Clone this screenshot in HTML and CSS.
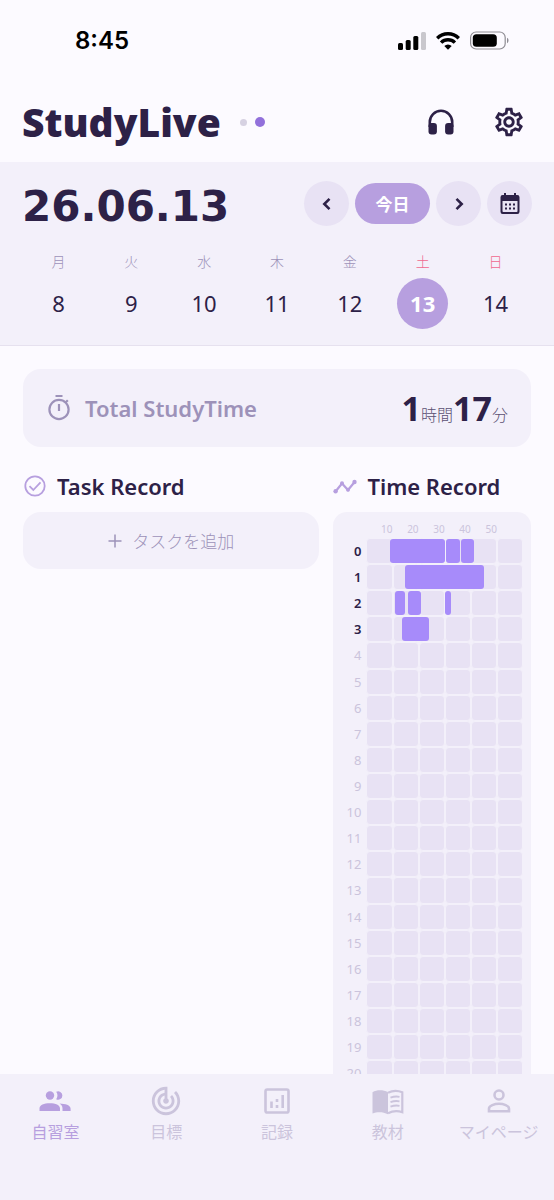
FILE: index.html
```html
<!DOCTYPE html>
<html lang="ja">
<head>
<meta charset="utf-8">
<meta name="viewport" content="width=device-width, initial-scale=1">
<title>StudyLive</title>
<link rel="stylesheet" href="styles.css">
</head>
<body>
<div class="app">
  <div class="status">
    <span class="status-time">8:45</span>
    <svg class="status-icons" viewBox="0 0 112 20" aria-hidden="true">
      <rect x="0" y="12" width="5" height="7" rx="1.5"/>
      <rect x="7.7" y="9" width="5" height="10" rx="1.5"/>
      <rect x="15.3" y="5" width="5" height="14" rx="1.5"/>
      <rect x="23" y="1" width="5" height="18" rx="1.5" fill="#c9c7cd"/>
      <g fill="none" stroke="#000" stroke-width="3.4">
        <path d="M39.2 7.2a15.4 15.4 0 0 1 21.6 0"/>
        <path d="M43.1 11.6a9.8 9.8 0 0 1 13.8 0"/>
      </g>
      <path d="M46.3 15a5.3 5.3 0 0 1 7.4 0L50 18.8z"/>
      <rect x="72.6" y="1" width="34.6" height="17" rx="5.5" fill="none" stroke="#8e8c93" stroke-width="1.2"/>
      <rect x="74.8" y="3.2" width="24" height="12.6" rx="3.6"/>
      <path d="M109 6.8v5.4c2-.8 2-4.6 0-5.4z" fill="#8e8c93"/>
    </svg>
  </div>
  <header class="header">
    <h1 class="logo">StudyLive</h1>
    <div class="pager"><span class="dot"></span><span class="dot dot-on"></span></div>
    <button class="icon-btn" type="button" aria-label="サウンド">
      <svg width="28" height="28" viewBox="0 0 28 28"><path d="M2.8 19v-5a11.2 11.2 0 0 1 22.4 0v5" fill="none" stroke="currentColor" stroke-width="2.6"/><rect x="1.5" y="15" width="8.4" height="11.5" rx="3" fill="currentColor"/><rect x="18.1" y="15" width="8.4" height="11.5" rx="3" fill="currentColor"/></svg>
    </button>
    <button class="icon-btn" type="button" aria-label="設定">
      <svg width="34" height="34" viewBox="0 0 24 24" fill="currentColor"><path d="M19.43 12.98c.04-.32.07-.64.07-.98 0-.34-.03-.66-.07-.98l2.11-1.65c.19-.15.24-.42.12-.64l-2-3.46c-.09-.16-.26-.25-.44-.25-.06 0-.12.01-.17.03l-2.49 1c-.52-.4-1.08-.73-1.69-.98l-.38-2.65C14.46 2.18 14.25 2 14 2h-4c-.25 0-.46.18-.49.42l-.38 2.65c-.61.25-1.17.59-1.69.98l-2.49-1c-.06-.02-.12-.03-.18-.03-.17 0-.34.09-.43.25l-2 3.46c-.13.22-.07.49.12.64l2.11 1.65c-.04.32-.07.65-.07.98 0 .33.03.66.07.98l-2.11 1.65c-.19.15-.24.42-.12.64l2 3.46c.09.16.26.25.44.25.06 0 .12-.01.17-.03l2.49-1c.52.4 1.08.73 1.69.98l.38 2.65c.03.24.24.42.49.42h4c.25 0 .46-.18.49-.42l.38-2.65c.61-.25 1.17-.59 1.69-.98l2.49 1c.06.02.12.03.18.03.17 0 .34-.09.43-.25l2-3.46c.12-.22.07-.49-.12-.64l-2.11-1.65zm-1.98-1.71c.04.31.05.52.05.73 0 .21-.02.43-.05.73l-.14 1.13.89.7 1.08.84-.7 1.21-1.27-.51-1.04-.42-.9.68c-.43.32-.84.56-1.25.73l-1.06.43-.16 1.13-.2 1.35h-1.4l-.19-1.35-.16-1.13-1.06-.43c-.43-.18-.83-.41-1.23-.71l-.91-.7-1.06.43-1.27.51-.7-1.21 1.08-.84.89-.7-.14-1.13c-.03-.31-.05-.54-.05-.74s.02-.43.05-.73l.14-1.13-.89-.7-1.08-.84.7-1.21 1.27.51 1.04.42.9-.68c.43-.32.84-.56 1.25-.73l1.06-.43.16-1.13.2-1.35h1.39l.19 1.35.16 1.13 1.06.43c.43.18.83.41 1.23.71l.91.7 1.06-.43 1.27-.51.7 1.21-1.07.85-.89.7.14 1.13zM12 8c-2.21 0-4 1.79-4 4s1.79 4 4 4 4-1.79 4-4-1.79-4-4-4zm0 6c-1.1 0-2-.9-2-2s.9-2 2-2 2 .9 2 2-.9 2-2 2z"/></svg>
    </button>
  </header>

  <section class="calendar">
    <div class="date-row">
      <h2 class="date">26.06.13</h2>
      <div class="date-nav">
        <button class="round" type="button" aria-label="前の日"><svg width="20" height="20" viewBox="0 0 20 20"><path d="M12.5 4.8 7.3 10l5.2 5.2" fill="none" stroke="currentColor" stroke-width="2.6"/></svg></button>
        <button class="today" type="button">今日</button>
        <button class="round" type="button" aria-label="次の日"><svg width="20" height="20" viewBox="0 0 20 20"><path d="m7.5 4.8 5.2 5.2-5.2 5.2" fill="none" stroke="currentColor" stroke-width="2.6"/></svg></button>
        <button class="round" type="button" aria-label="カレンダー"><svg width="20" height="22" viewBox="0 0 20 22"><path fill="currentColor" fill-rule="evenodd" d="M3 2h1V0h2v2h8V0h2v2h1a2.300 2.300 0 0 1 2.500 2.300v14.400A2.300 2.300 0 0 1 17 21H3a2.300 2.300 0 0 1-2.500-2.300V4.300A2.300 2.300 0 0 1 3 2zM2.500 8v10.200c0 .5.300.8.800.8h13.400c.5 0 .8-.3.800-.8V8z"/><path fill="currentColor" d="M5 10.500h2v2H5zm4 0h2v2H9zm4 0h2v2h-2zM5 14.500h2v2H5zm4 0h2v2H9zm4 0h2v2h-2z"/></svg></button>
      </div>
    </div>
    <div class="week">
      <button class="day" type="button"><span class="wd">月</span><span class="num">8</span></button>
      <button class="day" type="button"><span class="wd">火</span><span class="num">9</span></button>
      <button class="day" type="button"><span class="wd">水</span><span class="num">10</span></button>
      <button class="day" type="button"><span class="wd">木</span><span class="num">11</span></button>
      <button class="day" type="button"><span class="wd">金</span><span class="num">12</span></button>
      <button class="day" type="button" aria-current="date"><span class="wd weekend">土</span><span class="num num-on">13</span></button>
      <button class="day" type="button"><span class="wd weekend">日</span><span class="num">14</span></button>
    </div>
  </section>

  <main class="main">
    <section class="total">
      <svg width="26" height="28" viewBox="0 0 26 28" fill="none" stroke="currentColor" stroke-width="2.2"><circle cx="13" cy="15.500" r="9.600"/><path d="M13 10v7M9.500 2h7M19.800 8.200l2-2"/></svg>
      <span class="total-name">Total StudyTime</span>
      <span class="total-value"><b>1</b>時間<b>17</b>分</span>
    </section>

    <div class="columns">
      <section>
        <h3 class="title">
          <svg class="accent" width="24" height="24" viewBox="0 0 24 24" fill="none" stroke="currentColor" stroke-width="1.8"><circle cx="12" cy="12" r="9.700"/><path d="m6.500 12.200 3.800 3.800 7.200-7.600"/></svg>
          Task Record
        </h3>
        <button class="add" type="button">
          <svg width="14" height="14" viewBox="0 0 14 14" fill="none" stroke="currentColor" stroke-width="1.500"><path d="M7 .5v13M.5 7h13"/></svg>
          タスクを追加
        </button>
      </section>
      <section>
        <h3 class="title">
          <svg class="accent" width="24" height="24" viewBox="0 0 24 24" fill="currentColor"><path d="m2.500 17.500 6.500-8 6 6.500 7-8.500" fill="none" stroke="currentColor" stroke-width="2.200"/><circle cx="2.600" cy="17.200" r="2.200"/><circle cx="9" cy="9.300" r="2"/><circle cx="15" cy="15.700" r="2"/><circle cx="21.500" cy="8" r="2.200"/></svg>
          Time Record
        </h3>
        <div class="timetable" id="timetable">
          <div class="scale"><span>10</span><span>20</span><span>30</span><span>40</span><span>50</span></div>
        </div>
      </section>
    </div>
  </main>

  <nav class="tabs">
    <a class="tab tab-on" href="#room">
      <svg width="34" height="34" viewBox="0 0 34 34" fill="currentColor"><circle cx="12" cy="11.500" r="4.200"/><path d="M1.500 27v-2.500c0-3.600 4.500-5.300 10.300-5.300s10.200 1.700 10.200 5.300V27zM18.200 15.200a6.500 6.500 0 0 0 0-7.400 4.200 4.200 0 1 1 0 7.400zM24.500 27v-2.700c0-2.200-1.200-3.800-2.900-4.900 5.600.2 11 1.700 11 5.300V27z"/></svg>
      自習室</a>
    <a class="tab" href="#goal">
      <svg width="34" height="34" viewBox="0 0 24 24" fill="currentColor"><path d="M19.070 4.930l-1.410 1.410C19.100 7.790 20 9.790 20 12c0 4.420-3.580 8-8 8s-8-3.580-8-8c0-4.080 3.050-7.440 7-7.930v2.020C8.160 6.570 6 9.030 6 12c0 3.310 2.690 6 6 6s6-2.690 6-6c0-1.660-.67-3.160-1.760-4.240l-1.410 1.410C15.550 9.900 16 10.900 16 12c0 2.210-1.790 4-4 4s-4-1.790-4-4c0-1.860 1.280-3.410 3-3.860v2.140c-.6.350-1 .98-1 1.720 0 1.100.9 2 2 2s2-.9 2-2c0-.74-.4-1.380-1-1.720V2h-1C6.480 2 2 6.480 2 12s4.480 10 10 10 10-4.480 10-10c0-2.760-1.120-5.260-2.930-7.070z"/></svg>
      目標</a>
    <a class="tab" href="#log">
      <svg width="34" height="34" viewBox="0 0 34 34" fill="none" stroke="currentColor" stroke-width="2.600"><rect x="5.500" y="5.500" width="23" height="23" rx="1.800"/><path d="M11.500 17.500V24M17 21v3M17 15v3M22.700 11v13"/></svg>
      記録</a>
    <a class="tab" href="#books">
      <svg width="34" height="34" viewBox="0 0 34 34"><path fill="currentColor" d="M1.500 8.300C6 5.700 12 5.700 17 8.300v22c-5-2.600-11-2.600-15.500-.7z"/><g fill="none" stroke="currentColor"><path stroke-width="2.200" d="M17 8.700c4.500-2.300 9.500-2.500 14.300-.5v20c-4.300-1.400-9.800-1.200-14.300 1"/><path stroke-width="1.800" d="M19.500 13.700c3-1.200 6-1.500 9-.9M19.500 18.200c3-1.200 6-1.500 9-.9M19.500 22.700c3-1.200 6-1.500 9-.9"/></g></svg>
      教材</a>
    <a class="tab" href="#mypage">
      <svg width="34" height="34" viewBox="0 0 34 34" fill="none" stroke="currentColor" stroke-width="2.600"><circle cx="17" cy="11" r="4.500"/><path d="M7 27.200v-2.700c0-2.800 5.500-4.700 10-4.700s10 1.900 10 4.700v2.700z"/></svg>
      マイページ</a>
  </nav>
</div>
<script src="timetable.js"></script>
</body>
</html>
```

FILE: styles.css
```css
:root {
  --ink: #2d2147;
  --panel: #f3f0fa;
  --soft: #e8e2f4;
  --accent: #b79fdf;
  --muted: #9d92b9;
  --faint: #cbc4dc;
  --session: #a78bfa;
  --jp: "Noto Sans", "Noto Sans CJK JP", sans-serif;
}

* { box-sizing: border-box; }

body {
  margin: 0;
  background: #fcfaff;
  color: var(--ink);
  font-family: var(--jp);
}

h1, h2, h3 { margin: 0; }

svg { display: block; flex: none; }

button {
  border: 0;
  padding: 0;
  background: none;
  color: inherit;
  font: inherit;
  cursor: pointer;
}

.app {
  display: flex;
  flex-direction: column;
  height: 100vh;
}

.status {
  display: flex;
  flex: none;
  align-items: center;
  justify-content: space-between;
  height: 82px;
  padding: 0 44px 0 75px;
  color: #000;
}

.status-time {
  font: 600 24px/28px Inter, sans-serif;
}

.status-icons { width: 112px; height: 20px; }

.header {
  display: flex;
  flex: none;
  align-items: center;
  height: 80px;
  padding: 0 23px 0 22px;
}

.logo {
  font: 900 39px/48px "Noto Sans", sans-serif;
}

.pager {
  display: flex;
  align-items: center;
  gap: 8px;
  margin: 0 auto 0 19px;
}

.dot {
  width: 7px;
  height: 7px;
  border-radius: 50%;
  background: #d6d1e2;
}

.dot-on {
  width: 10px;
  height: 10px;
  background: #9270db;
}

.icon-btn {
  display: grid;
  place-items: center;
  width: 44px;
  height: 44px;
}

.icon-btn + .icon-btn { margin-left: 24px; }

.calendar {
  flex: none;
  padding: 19px 22px 16px;
  border-bottom: 1px solid #e6e1ef;
  background: var(--panel);
}

.date-row {
  display: flex;
  align-items: center;
  justify-content: space-between;
}

.date {
  padding-top: 6px;
  font: 700 42px/39px "DejaVu Sans", sans-serif;
}

.date-nav {
  display: flex;
  align-items: center;
  gap: 6px;
}

.round {
  display: grid;
  place-items: center;
  width: 45px;
  height: 45px;
  border-radius: 50%;
  background: var(--soft);
}

.today {
  width: 75px;
  height: 41px;
  border-radius: 21px;
  background: var(--accent);
  color: #fff;
  font-size: 17px;
  font-weight: 700;
}

.week {
  display: grid;
  grid-template-columns: repeat(7, 1fr);
  margin-top: 26px;
}

.day {
  display: flex;
  flex-direction: column;
  align-items: center;
  gap: 6px;
}

.wd {
  color: var(--muted);
  font-size: 14px;
  font-weight: 300;
  line-height: 20px;
}

.weekend { color: #f0688f; }

.num {
  width: 51px;
  border-radius: 50%;
  font-size: 22px;
  line-height: 51px;
}

.num-on {
  background: var(--accent);
  color: #fff;
  font-weight: 700;
}

.main {
  flex: 1;
  min-height: 0;
  overflow-y: auto;
  padding: 23px 23px 0;
  scrollbar-width: none;
}

.total {
  display: flex;
  align-items: center;
  height: 78px;
  padding: 0 23px;
  border-radius: 18px;
  background: var(--panel);
  color: var(--muted);
}

.total-name {
  margin: 0 auto 0 13px;
  font-size: 22px;
  font-weight: 600;
}

.total-value {
  color: #5b5073;
  font-size: 16px;
  font-weight: 300;
}

.total-value b {
  color: var(--ink);
  font-size: 34px;
  font-weight: 700;
}

.columns {
  display: grid;
  grid-template-columns: 3fr 2fr;
  gap: 14px;
  margin-top: 24px;
}

.title {
  display: flex;
  align-items: center;
  gap: 10px;
  margin-bottom: 11px;
  font-size: 22px;
  font-weight: 600;
  line-height: 30px;
  white-space: nowrap;
}

.accent { color: var(--accent); }

.add {
  display: flex;
  align-items: center;
  justify-content: center;
  gap: 10px;
  width: 100%;
  height: 57px;
  border-radius: 18px;
  background: var(--panel);
  color: var(--muted);
  font-size: 17px;
  font-weight: 300;
}

.timetable {
  padding: 9px 8px 8px 0;
  border-radius: 14px;
  background: var(--panel);
}

.scale,
.hour {
  display: grid;
  grid-template-columns: 28px 1fr;
  column-gap: 5px;
}

.scale {
  grid-template-columns: repeat(6, 1fr);
  column-gap: 0;
  padding-left: 33px;
  color: var(--faint);
  font-size: 10px;
  line-height: 17px;
  text-align: right;
}

.hour {
  align-items: center;
  color: var(--faint);
  font-size: 13px;
  line-height: 18px;
}

.hour-name { text-align: right; }

.hour-used .hour-name {
  color: var(--ink);
  font-weight: 600;
}

.track {
  position: relative;
  display: grid;
  grid-template-columns: repeat(6, 1fr);
}

.cell {
  aspect-ratio: 1;
  border: 1px solid var(--panel);
  border-radius: 4px;
  background: var(--soft);
}

.session {
  position: absolute;
  top: 1px;
  bottom: 1px;
  border-radius: 3px;
  background: var(--session);
}

.tabs {
  display: grid;
  flex: none;
  grid-template-columns: repeat(5, 1fr);
  padding: 10px 0 58px;
  background: var(--panel);
}

.tab {
  display: flex;
  flex-direction: column;
  align-items: center;
  gap: 4px;
  color: var(--faint);
  font-size: 16px;
  line-height: 20px;
  text-decoration: none;
  white-space: nowrap;
}

.tab-on { color: var(--accent); }
```

FILE: timetable.js
```js
// Study sessions per hour, as [start, end] in percent of the hour.
const sessions = {
  0: [[14.8, 50.3], [51, 60], [60.6, 68.8]],
  1: [[24.8, 75]],
  2: [[18.3, 24.8], [26.5, 35], [50.1, 54.1]],
  3: [[22.5, 39.7]]
};

const table = document.getElementById("timetable");
for (let h = 0; h < 24; h++) {
  const row = document.createElement("div");
  row.className = sessions[h] ? "hour hour-used" : "hour";
  const name = document.createElement("span");
  name.className = "hour-name";
  name.textContent = h;
  const track = document.createElement("div");
  track.className = "track";
  for (let i = 0; i < 6; i++) {
    const cell = document.createElement("span");
    cell.className = "cell";
    track.append(cell);
  }
  for (const [start, end] of sessions[h] || []) {
    const bar = document.createElement("span");
    bar.className = "session";
    bar.style.left = start + "%";
    bar.style.width = (end - start) + "%";
    track.append(bar);
  }
  row.append(name, track);
  table.append(row);
}
```
